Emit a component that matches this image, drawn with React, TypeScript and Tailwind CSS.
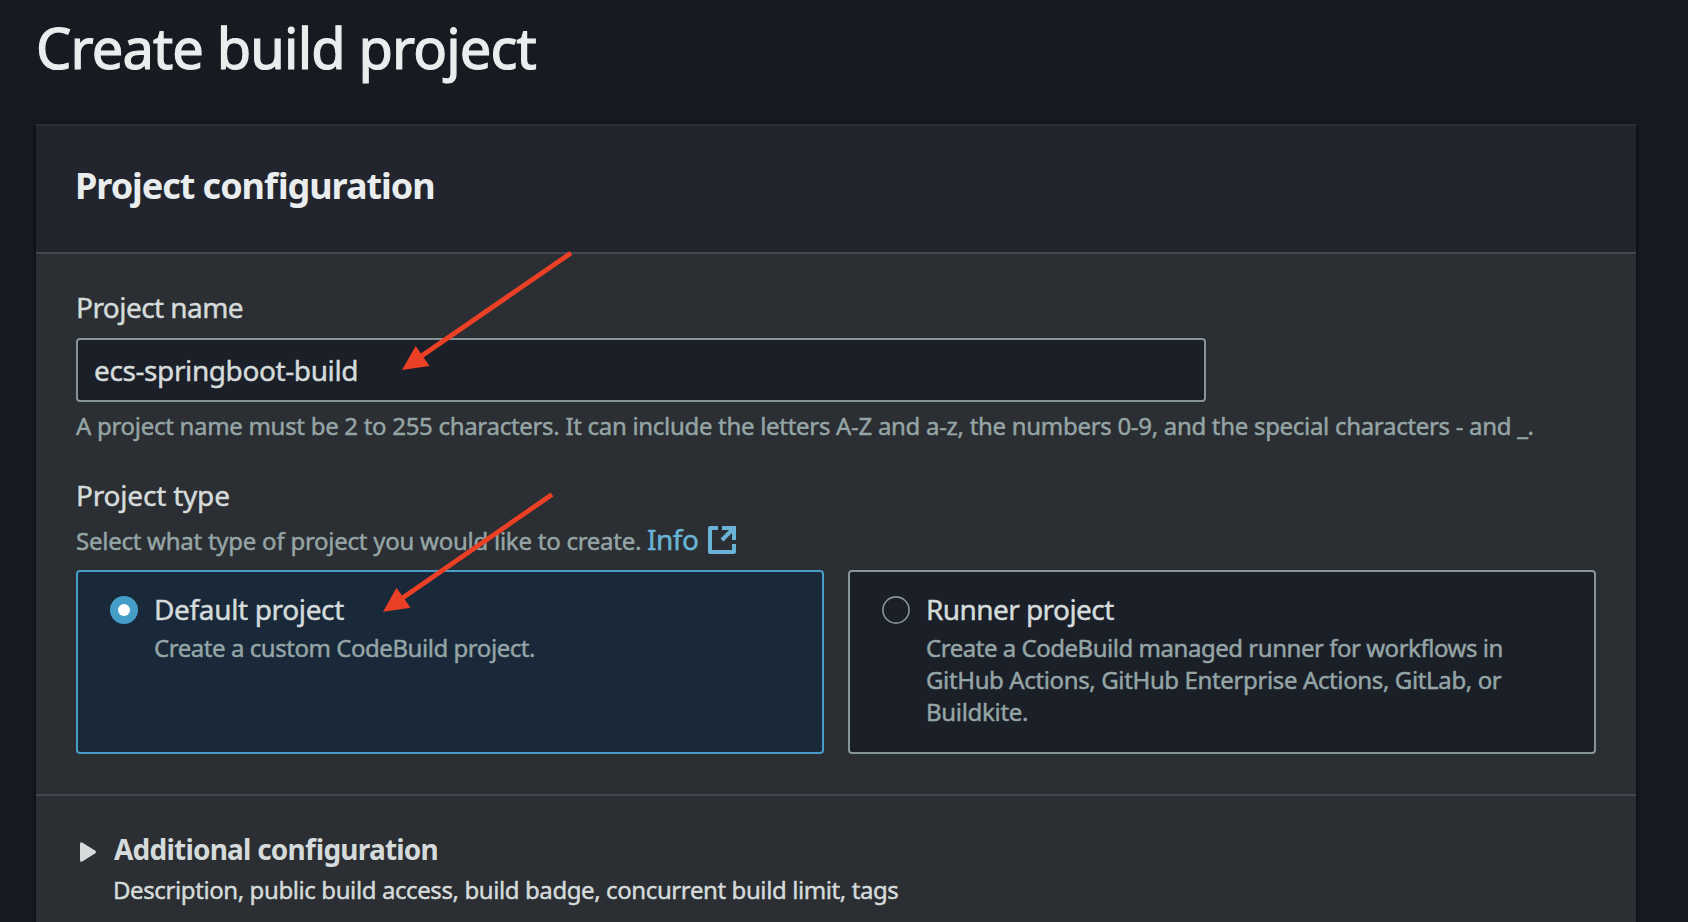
import type { ReactNode } from 'react';

function ExternalIcon() {
  return (
    <svg className="block size-7 shrink-0" viewBox="0 0 28 28" fill="none" stroke="#69b4d6" strokeWidth="4" strokeLinejoin="round">
      <path d="M10 2H2V26H26V18" />
      <path d="M14 2H26V14" strokeLinejoin="miter" />
      <path d="M25 3L14 14" />
    </svg>
  );
}

function Arrow({ tail, head, points }: { tail: [number, number]; head: [number, number]; points: string }) {
  return (
    <g fill="#eb4025" stroke="#eb4025">
      <line x1={tail[0]} y1={tail[1]} x2={head[0]} y2={head[1]} strokeWidth="4.8" />
      <polygon points={points} stroke="none" />
    </g>
  );
}

function Tile({ title, titleClass, selected, children }: { title: string; titleClass: string; selected?: boolean; children: ReactNode }) {
  return (
    <label
      className={
        selected
          ? 'flex h-[184px] rounded border-2 border-[#469dc7] bg-[#192939] pt-[19px] pl-8'
          : 'flex h-[184px] rounded border-2 border-[#879596] bg-[#1b1f28] pt-[19px] pl-8'
      }
    >
      {selected ? (
        <span className="mt-[5px] flex size-7 shrink-0 items-center justify-center rounded-full bg-[#469dc7]">
          <span className="size-3 rounded-full bg-white" />
        </span>
      ) : (
        <svg className="mt-[5px] size-7 shrink-0" viewBox="0 0 28 28" fill="none" stroke="#879596" strokeWidth="1.6">
          <circle cx="14" cy="14" r="13.1" />
        </svg>
      )}
      <span className="ml-4 flex flex-col whitespace-nowrap">
        <span className={`text-[28px] leading-9 ${titleClass}`}>{title}</span>
        <span className="mt-[5px] flex flex-col text-2xl/8 text-[#95a5a6]">{children}</span>
      </span>
    </label>
  );
}

export default function App() {
  return (
    <div className="relative h-[922px] w-[1688px] overflow-hidden bg-[#171a21] font-['Noto_Sans','Open_Sans',sans-serif] text-[#d5dbdb] [-webkit-text-stroke:0.45px]">
      <header className="h-[124px] pt-[17px] pl-9">
        <h1 className="text-[56px] leading-[60px] tracking-[-0.86px] whitespace-nowrap text-[#eaeded] [-webkit-text-stroke:1.2px]">
          Create build project
        </h1>
      </header>

      <main className="mx-9 h-[840px] w-[1600px] border-t-2 border-[#2c2f34] bg-[#2b2e32] shadow-[0_2px_4px_1px_rgba(0,0,0,0.5)]">
        <div className="h-32 border-b-2 border-[#414750] bg-[#22252d] pt-[38px] pl-[39px]">
          <h2 className="text-[36px] leading-[44px] font-bold tracking-[-1.05px] whitespace-nowrap text-[#eaeded] [-webkit-text-stroke:0] [font-feature-settings:'liga']">
            Project configuration
          </h2>
        </div>

        <section className="flex h-[542px] flex-col border-b-2 border-[#414750] px-10 pt-[35px] whitespace-nowrap">
          <div className="text-[28px] leading-9 tracking-[-0.55px]">Project name</div>
          <div className="mt-[13px] flex h-16 w-[1130px] items-center rounded border-2 border-[#879596] bg-[#1b1f28] pl-4 text-[28px] tracking-[-0.4px]">
            ecs-springboot-build
          </div>
          <div className="mt-2 text-2xl/8 tracking-[-0.298px] text-[#95a5a6]">
            A project name must be 2 to 255 characters. It can include the letters A-Z and a-z, the numbers 0-9, and the special characters - and _.
          </div>
          <div className="mt-[35px] text-[28px] leading-9 tracking-[-0.2px]">Project type</div>
          <div className="mt-[9px] flex h-9 text-2xl/9 tracking-[-0.25px] text-[#95a5a6]">
            <div className="-mt-px flex items-baseline">
              <span className="w-[571px]">Select what type of project you would like to create.</span>
              <span className="w-[61px] text-[28px] tracking-[-0.5px] text-[#69b4d6]">Info</span>
            </div>
            <div className="pt-1">
              <ExternalIcon />
            </div>
          </div>
          <div className="mt-3 grid w-[1520px] grid-cols-2 gap-6">
            <Tile title="Default project" titleClass="tracking-[-0.35px]" selected>
              <span className="tracking-[-0.45px]">Create a custom CodeBuild project.</span>
            </Tile>
            <Tile title="Runner project" titleClass="tracking-[-0.57px]">
              <span className="tracking-[-0.47px]">Create a CodeBuild managed runner for workflows in</span>
              <span className="tracking-[-0.37px]">GitHub Actions, GitHub Enterprise Actions, GitLab, or</span>
              <span className="tracking-[-0.3px]">Buildkite.</span>
            </Tile>
          </div>
        </section>

        <section className="flex pt-[35px] pl-11">
          <svg className="mt-[11px] h-5 w-[34px]" viewBox="0 0 34 20" fill="#d5dbdb">
            <path d="M0 2Q0-.8 2.6.8L15 8.6Q17 10 15 11.4L2.6 19.2Q0 20.8 0 18Z" />
          </svg>
          <div className="flex flex-col whitespace-nowrap">
            <span className="text-[28px] leading-9 font-bold tracking-[-0.78px] [-webkit-text-stroke:0] [font-feature-settings:'liga']">
              Additional configuration
            </span>
            <span className="mt-[7px] -ml-px text-2xl/8 tracking-[-0.4px]">
              Description, public build access, build badge, concurrent build limit, tags
            </span>
          </div>
        </section>
      </main>

      <svg className="pointer-events-none absolute inset-0" width="1688" height="922" viewBox="0 0 1688 922">
        <Arrow tail={[571, 253]} head={[420, 357]} points="402,370 415.7,346 429.5,366" />
        <Arrow tail={[552, 494.5]} head={[401, 599]} points="383,611.8 396.5,587.8 410.5,607.8" />
      </svg>
    </div>
  );
}
